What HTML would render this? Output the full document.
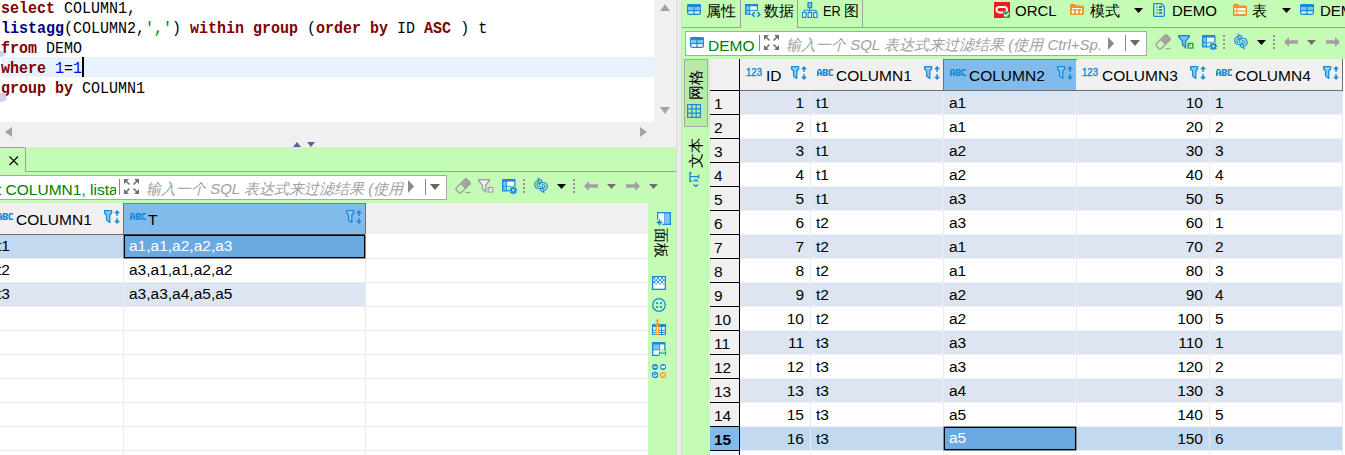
<!DOCTYPE html><html><head><meta charset="utf-8"><style>
*{margin:0;padding:0;box-sizing:border-box}
html,body{width:1345px;height:455px;overflow:hidden;background:#f0f0f0;font-family:"Liberation Sans", sans-serif;font-size:15px;color:#000;position:relative}
.t{position:absolute;white-space:nowrap;line-height:18px;font-size:15.5px}
.m{position:absolute;white-space:pre;font-family:"Liberation Mono", monospace;font-size:16.5px;line-height:20px;transform:scaleX(0.909);transform-origin:0 0}
.kw{color:#7f0000;font-weight:bold}
.fn{color:#000080;font-weight:bold}
.str{color:#008000}
.num{color:#0000ff}

</style></head><body>
<div style="position:absolute;left:0px;top:0px;width:654px;height:122px;background:#fff"></div>
<div style="position:absolute;left:1px;top:57px;width:653px;height:20px;background:#e8f2fe"></div>
<div class="m" style="left:1px;top:-1px"><span class="kw">select</span> COLUMN1,</div>
<div class="m" style="left:1px;top:19px"><span class="fn">listagg</span>(COLUMN2,<span class="str">','</span>) <span class="kw">within</span> <span class="kw">group</span> (<span class="kw">order</span> <span class="kw">by</span> ID <span class="kw">ASC</span> ) t</div>
<div class="m" style="left:1px;top:39px"><span class="kw">from</span> DEMO</div>
<div class="m" style="left:1px;top:59px"><span class="kw">where</span> <span class="num">1</span>=<span class="num">1</span></div>
<div class="m" style="left:1px;top:79px"><span class="kw">group</span> <span class="kw">by</span> COLUMN1</div>
<div style="position:absolute;left:82px;top:57px;width:2px;height:20px;background:#000"></div>
<div style="position:absolute;left:-5px;top:50.5px;width:10px;height:6px;background:#cfcff6;border-radius:50%"></div>
<div style="position:absolute;left:-7px;top:93px;width:14px;height:9px;background:#cfcff6;border-radius:50%"></div>
<div style="position:absolute;left:654px;top:0px;width:22px;height:122px;background:#f0f0f0"></div>
<svg style="position:absolute;left:660px;top:4px" width="10" height="7"><polygon points="0,7 10,7 5,0" fill="#a3a3a3"/></svg>
<svg style="position:absolute;left:660px;top:107px" width="10" height="7"><polygon points="0,0 10,0 5,7" fill="#a3a3a3"/></svg>
<svg style="position:absolute;left:5px;top:127px" width="7" height="10"><polygon points="7,0 7,10 0,5" fill="#a3a3a3"/></svg>
<svg style="position:absolute;left:640px;top:127px" width="7" height="10"><polygon points="0,0 0,10 7,5" fill="#a3a3a3"/></svg>
<div style="position:absolute;left:676px;top:0px;width:6px;height:455px;background:#ececec;border-left:1px solid #dadada;border-right:1px solid #dadada"></div>
<div style="position:absolute;left:675px;top:0px;width:1px;height:147px;background:#f8f8f8"></div>
<div style="position:absolute;left:0px;top:147px;width:676px;height:308px;background:#c5fcb5;border-top-right-radius:3px"></div>
<div style="position:absolute;left:0px;top:146px;width:676px;height:1px;background:#f4f0f4"></div>
<svg style="position:absolute;left:293px;top:142px" width="23" height="5"><polygon points="0,5 8,5 4,0" fill="#5f5f9f"/><polygon points="14,0 22,0 18,5" fill="#5f5f9f"/></svg>
<div style="position:absolute;left:-3px;top:147px;width:29px;height:25px;border:1px solid #a0a0a0;border-bottom:none;border-top-right-radius:2px"></div>
<svg style="position:absolute;left:9px;top:156px" width="10" height="10"><path d="M0.5,0.5 L9,9 M9,0.5 L0.5,9" stroke="#000" stroke-width="1.1"/></svg>
<div style="position:absolute;left:25px;top:171px;width:651px;height:1px;background:#a0a0a0"></div>
<div style="position:absolute;left:-2px;top:175px;width:449px;height:25px;background:#fff;border:1px solid #a8a8a8"></div>
<div class="t" style="left:-3px;top:181px;color:#008000;width:119px;overflow:hidden;font-size:15.5px">t COLUMN1, lista</div>
<div style="position:absolute;left:119px;top:179px;width:1px;height:16px;background:#8c8c8c"></div>
<svg style="position:absolute;left:124px;top:179px;overflow:visible" width="15" height="15" viewBox="0 0 15 15"><path d="M1.5,1.5 L5.5,5.5 M13.5,1.5 L9.5,5.5 M1.5,13.5 L5.5,9.5 M13.5,13.5 L9.5,9.5" stroke="#707070" stroke-width="1.6"/><polygon points="0,0 5,0 0,5" fill="#707070"/><polygon points="15,0 10,0 15,5" fill="#707070"/><polygon points="0,15 5,15 0,10" fill="#707070"/><polygon points="15,15 10,15 15,10" fill="#707070"/></svg>
<div class="t" style="left:146px;top:180px;color:#a0a0a0;font-style:italic;width:258px;overflow:hidden;font-size:15px">输入一个 SQL 表达式来过滤结果 (使用 Ctrl</div>
<svg style="position:absolute;left:408px;top:180px" width="7" height="13"><polygon points="0,0 0,13 6,6.5" fill="#8a8a8a"/></svg>
<div style="position:absolute;left:425px;top:179px;width:1px;height:16px;background:#8c8c8c"></div>
<svg style="position:absolute;left:430px;top:184px" width="11" height="6"><polygon points="0,0 10,0 5,6" fill="#666"/></svg>
<svg style="position:absolute;left:456px;top:179px;overflow:visible" width="15" height="14" viewBox="0 0 15 14"><g transform="rotate(-45 7 7)"><rect x="-0.5" y="3.6" width="15" height="6.8" rx="2" fill="none" stroke="#a3a3a3" stroke-width="1.5"/><path d="M6.5,3 H13 Q15.2,3 15.2,5 V9 Q15.2,11 13,11 H6.5 Z" fill="#a3a3a3"/></g><rect x="9.5" y="13" width="5" height="1.2" fill="#a3a3a3"/></svg>
<svg style="position:absolute;left:478px;top:179px;overflow:visible" width="16" height="14" viewBox="0 0 16 14"><polygon points="0.7,0.7 11.3,0.7 11.3,1.7 7.6,6 7.6,12.6 4.4,9.6 4.4,6 0.7,1.7" fill="#f4f4f4" stroke="#a3a3a3" stroke-width="1.4" stroke-linejoin="miter"/><rect x="10.2" y="8.4" width="4.6" height="4.6" fill="#fff" stroke="#a3a3a3" stroke-width="1.3"/><rect x="11.3" y="9.5" width="1.5" height="1.5" fill="#a3a3a3"/></svg>
<svg style="position:absolute;left:502px;top:179px;overflow:visible" width="16" height="16" viewBox="0 0 16 16"><rect x="0" y="0" width="13.5" height="12.5" rx="1" fill="#1b8ad6"/><rect x="1.3" y="2.6" width="2.9" height="4.2" fill="#7cc5f0"/><rect x="1.3" y="7.6" width="2.9" height="3.6" fill="#7cc5f0"/><rect x="5" y="2.6" width="7.2" height="4.2" fill="#fff"/><rect x="5" y="7.6" width="4" height="3.6" fill="#c5fcb5"/><circle cx="11.3" cy="11.3" r="4.3" fill="#c5fcb5"/><g fill="#1b8ad6"><circle cx="11.3" cy="11.3" r="2.8"/><rect x="10.5" y="7.3" width="1.6" height="8"/><rect x="7.3" y="10.5" width="8" height="1.6"/><rect x="10.5" y="7.3" width="1.6" height="8" transform="rotate(45 11.3 11.3)"/><rect x="10.5" y="7.3" width="1.6" height="8" transform="rotate(-45 11.3 11.3)"/></g><circle cx="11.3" cy="11.3" r="1.1" fill="#fff"/></svg>
<svg style="position:absolute;left:523px;top:179px;overflow:visible" width="2" height="14" viewBox="0 0 2 14"><rect x="0" y="0" width="2" height="2" fill="#a38c9a"/><rect x="0" y="4" width="2" height="2" fill="#a38c9a"/><rect x="0" y="8" width="2" height="2" fill="#a38c9a"/><rect x="0" y="12" width="2" height="2" fill="#a38c9a"/></svg>
<svg style="position:absolute;left:534px;top:178px;overflow:visible" width="15" height="15" viewBox="0 0 15 15"><g transform="rotate(-15 7 7.5)"><path d="M6.5,9 C0.8,9 0.8,3 6,3 M7.5,6 C13.2,6 13.2,12 8,12" fill="none" stroke="#1b8ad6" stroke-width="3.4"/><path d="M6.5,9 C0.8,9 0.8,3 6,3 M7.5,6 C13.2,6 13.2,12 8,12" fill="none" stroke="#c5fcb5" stroke-width="1.1"/><polygon points="6,0 9.2,3 6,6" fill="#c5fcb5" stroke="#1b8ad6" stroke-width="1.1"/><polygon points="8,9 4.8,12 8,15" fill="#c5fcb5" stroke="#1b8ad6" stroke-width="1.1"/></g></svg>
<svg style="position:absolute;left:557px;top:184px;overflow:visible" width="9" height="5" viewBox="0 0 9 5"><polygon points="0,0 9,0 4.5,5" fill="#000"/></svg>
<svg style="position:absolute;left:573px;top:179px;overflow:visible" width="2" height="14" viewBox="0 0 2 14"><rect x="0" y="0" width="2" height="2" fill="#a38c9a"/><rect x="0" y="4" width="2" height="2" fill="#a38c9a"/><rect x="0" y="8" width="2" height="2" fill="#a38c9a"/><rect x="0" y="12" width="2" height="2" fill="#a38c9a"/></svg>
<svg style="position:absolute;left:584px;top:181px;overflow:visible" width="14" height="10" viewBox="0 0 14 10"><polygon points="0,5 5,0 5,3.2 14,3.2 14,6.8 5,6.8 5,10" fill="#a39ea3"/></svg>
<svg style="position:absolute;left:607px;top:184px;overflow:visible" width="9" height="5" viewBox="0 0 9 5"><polygon points="0,0 9,0 4.5,5" fill="#707070"/></svg>
<svg style="position:absolute;left:626px;top:181px;overflow:visible" width="14" height="10" viewBox="0 0 14 10"><polygon points="14,5 9,0 9,3.2 0,3.2 0,6.8 9,6.8 9,10" fill="#a39ea3"/></svg>
<svg style="position:absolute;left:649px;top:184px;overflow:visible" width="9" height="5" viewBox="0 0 9 5"><polygon points="0,0 9,0 4.5,5" fill="#707070"/></svg>
<div style="position:absolute;left:0px;top:203px;width:648px;height:252px;background:#fff"></div>
<div style="position:absolute;left:0px;top:203px;width:648px;height:31px;background:#f0f0f0"></div>
<div style="position:absolute;left:124px;top:203px;width:241px;height:31px;background:#80bbeb"></div>
<div style="position:absolute;left:123px;top:203px;width:1px;height:31px;background:#6e6e6e"></div>
<div style="position:absolute;left:365px;top:203px;width:1px;height:31px;background:#6e6e6e"></div>
<div style="position:absolute;left:0px;top:234px;width:365px;height:1px;background:#6e6e6e"></div>
<div class="t" style="left:16px;top:211px;font-size:15.5px">COLUMN1</div>
<div class="t" style="left:148px;top:211px;font-size:15.5px">T</div>
<div style="position:absolute;left:124px;top:203px;width:241px;height:1px;background:#808080"></div>
<svg style="position:absolute;left:-3px;top:213px;overflow:visible" width="17" height="7" viewBox="0 0 17 7"><rect x="0" y="1.5" width="1.7" height="5.5" fill="#1b8ad6"/><rect x="3.4" y="1.5" width="1.7" height="5.5" fill="#1b8ad6"/><rect x="1" y="0" width="3" height="1.6" fill="#1b8ad6"/><rect x="0" y="3.7" width="5" height="1.3" fill="#1b8ad6"/><rect x="5.8" y="0" width="1.7" height="7" fill="#1b8ad6"/><rect x="5.8" y="0" width="4.2" height="1.5" fill="#1b8ad6"/><rect x="5.8" y="2.9" width="4.2" height="1.4" fill="#1b8ad6"/><rect x="5.8" y="5.5" width="4.2" height="1.5" fill="#1b8ad6"/><rect x="9.3" y="0.7" width="1.7" height="2.4" fill="#1b8ad6"/><rect x="9.3" y="3.9" width="1.7" height="2.4" fill="#1b8ad6"/><rect x="11.6" y="0.7" width="1.7" height="5.6" fill="#1b8ad6"/><rect x="12.4" y="0" width="3.8" height="1.5" fill="#1b8ad6"/><rect x="12.4" y="5.5" width="3.8" height="1.5" fill="#1b8ad6"/></svg>
<svg style="position:absolute;left:130px;top:213px;overflow:visible" width="17" height="7" viewBox="0 0 17 7"><rect x="0" y="1.5" width="1.7" height="5.5" fill="#1b8ad6"/><rect x="3.4" y="1.5" width="1.7" height="5.5" fill="#1b8ad6"/><rect x="1" y="0" width="3" height="1.6" fill="#1b8ad6"/><rect x="0" y="3.7" width="5" height="1.3" fill="#1b8ad6"/><rect x="5.8" y="0" width="1.7" height="7" fill="#1b8ad6"/><rect x="5.8" y="0" width="4.2" height="1.5" fill="#1b8ad6"/><rect x="5.8" y="2.9" width="4.2" height="1.4" fill="#1b8ad6"/><rect x="5.8" y="5.5" width="4.2" height="1.5" fill="#1b8ad6"/><rect x="9.3" y="0.7" width="1.7" height="2.4" fill="#1b8ad6"/><rect x="9.3" y="3.9" width="1.7" height="2.4" fill="#1b8ad6"/><rect x="11.6" y="0.7" width="1.7" height="5.6" fill="#1b8ad6"/><rect x="12.4" y="0" width="3.8" height="1.5" fill="#1b8ad6"/><rect x="12.4" y="5.5" width="3.8" height="1.5" fill="#1b8ad6"/></svg>
<svg style="position:absolute;left:104px;top:210px;overflow:visible" width="17" height="14" viewBox="0 0 17 14"><polygon points="0.6,0.6 7.6,0.6 7.6,3 5.8,5 5.8,12.4 2.6,10 2.6,5 0.6,3" fill="#8ccbf2" stroke="#1b8ad6" stroke-width="1.3" stroke-linejoin="round"/><polygon points="10.1,3.2 13.05,0.1 16,3.2" fill="#1b8ad6"/><rect x="12.25" y="2.8" width="1.6" height="3" fill="#1b8ad6"/><rect x="12.25" y="8.2" width="1.6" height="3" fill="#1b8ad6"/><polygon points="10.1,10.8 13.05,14 16,10.8" fill="#1b8ad6"/></svg>
<svg style="position:absolute;left:346px;top:210px;overflow:visible" width="17" height="14" viewBox="0 0 17 14"><polygon points="0.6,0.6 7.6,0.6 7.6,3 5.8,5 5.8,12.4 2.6,10 2.6,5 0.6,3" fill="#8ccbf2" stroke="#1b8ad6" stroke-width="1.3" stroke-linejoin="round"/><polygon points="10.1,3.2 13.05,0.1 16,3.2" fill="#1b8ad6"/><rect x="12.25" y="2.8" width="1.6" height="3" fill="#1b8ad6"/><rect x="12.25" y="8.2" width="1.6" height="3" fill="#1b8ad6"/><polygon points="10.1,10.8 13.05,14 16,10.8" fill="#1b8ad6"/></svg>
<div style="position:absolute;left:0px;top:235px;width:123px;height:23px;background:#c3d9ef"></div>
<div style="position:absolute;left:124px;top:235px;width:241px;height:23px;background:#c3d9ef"></div>
<div style="position:absolute;left:0px;top:258px;width:648px;height:1px;background:#ebebeb"></div>
<div style="position:absolute;left:0px;top:283px;width:123px;height:23px;background:#dce5f1"></div>
<div style="position:absolute;left:124px;top:283px;width:241px;height:23px;background:#dce5f1"></div>
<div style="position:absolute;left:0px;top:282px;width:648px;height:1px;background:#ebebeb"></div>
<div style="position:absolute;left:0px;top:306px;width:648px;height:1px;background:#ebebeb"></div>
<div style="position:absolute;left:0px;top:330px;width:648px;height:1px;background:#ebebeb"></div>
<div style="position:absolute;left:0px;top:354px;width:648px;height:1px;background:#ebebeb"></div>
<div style="position:absolute;left:0px;top:378px;width:648px;height:1px;background:#ebebeb"></div>
<div style="position:absolute;left:0px;top:402px;width:648px;height:1px;background:#ebebeb"></div>
<div style="position:absolute;left:0px;top:426px;width:648px;height:1px;background:#ebebeb"></div>
<div style="position:absolute;left:0px;top:450px;width:648px;height:1px;background:#ebebeb"></div>
<div style="position:absolute;left:123px;top:235px;width:1px;height:220px;background:#ebebeb"></div>
<div style="position:absolute;left:365px;top:235px;width:1px;height:220px;background:#ebebeb"></div>
<div style="position:absolute;left:124px;top:235px;width:241px;height:23px;background:#6aa9e2;border:1px solid #000;box-shadow:0 0 0 0.4px #000"></div>
<div class="t" style="left:-3px;top:237px;">t1</div>
<div class="t" style="left:129px;top:237px;color:#fff">a1,a1,a2,a2,a3</div>
<div class="t" style="left:-3px;top:261px;">t2</div>
<div class="t" style="left:129px;top:261px;">a3,a1,a1,a2,a2</div>
<div class="t" style="left:-3px;top:285px;">t3</div>
<div class="t" style="left:129px;top:285px;">a3,a3,a4,a5,a5</div>
<div style="position:absolute;left:648px;top:203px;width:28px;height:252px;background:#c5fcb5"></div>
<svg style="position:absolute;left:657px;top:212px;overflow:visible" width="14" height="14" viewBox="0 0 14 14"><rect x="0" y="0" width="14" height="13" fill="#1b8ad6"/><rect x="1.3" y="1.3" width="6" height="10.4" fill="#fff"/><rect x="8" y="1.3" width="4.7" height="10.4" fill="#7cc5f0"/><circle cx="2.5" cy="10.5" r="3.2" fill="#c5fcb5"/><g fill="#1b8ad6"><circle cx="2.5" cy="10.5" r="1.8"/><rect x="1.9" y="7.5" width="1.2" height="6"/><rect x="-0.5" y="9.9" width="6" height="1.2"/></g></svg>
<div style="position:absolute;left:631px;top:234px;width:60px;height:18px;line-height:18px;text-align:center;font-size:15px;transform:rotate(90deg);white-space:nowrap;">面板</div>
<svg style="position:absolute;left:652px;top:276px;overflow:visible" width="14" height="14" viewBox="0 0 14 14"><rect x="0" y="0" width="14" height="14" fill="#1b8ad6"/><rect x="1.3" y="1.3" width="11.4" height="11.4" fill="#fff"/><rect x="1.3" y="1.3" width="1.9" height="1.9" fill="#1b8ad6"/><rect x="5.1" y="1.3" width="1.9" height="1.9" fill="#1b8ad6"/><rect x="8.9" y="1.3" width="1.9" height="1.9" fill="#1b8ad6"/><rect x="3.2" y="3.2" width="1.9" height="1.9" fill="#1b8ad6"/><rect x="6.999999999999999" y="3.2" width="1.9" height="1.9" fill="#1b8ad6"/><rect x="10.8" y="3.2" width="1.9" height="1.9" fill="#1b8ad6"/><rect x="1.3" y="5.1" width="1.9" height="1.9" fill="#1b8ad6"/><rect x="5.1" y="5.1" width="1.9" height="1.9" fill="#1b8ad6"/><rect x="8.9" y="5.1" width="1.9" height="1.9" fill="#1b8ad6"/><rect x="3.2" y="6.999999999999999" width="1.9" height="1.9" fill="#7cc5f0"/><rect x="6.999999999999999" y="6.999999999999999" width="1.9" height="1.9" fill="#7cc5f0"/><rect x="10.8" y="6.999999999999999" width="1.9" height="1.9" fill="#7cc5f0"/></svg>
<svg style="position:absolute;left:652px;top:298px;overflow:visible" width="14" height="14" viewBox="0 0 14 14"><circle cx="7" cy="7" r="6.3" fill="none" stroke="#1b8ad6" stroke-width="1.3"/><rect x="4.2" y="4.2" width="1.9" height="1.9" fill="#1b8ad6"/><rect x="4.2" y="8" width="1.9" height="1.9" fill="#1b8ad6"/><rect x="8" y="4.2" width="1.9" height="1.9" fill="#1b8ad6"/><rect x="8" y="8" width="1.9" height="1.9" fill="#1b8ad6"/></svg>
<svg style="position:absolute;left:652px;top:319px;overflow:visible" width="14" height="16" viewBox="0 0 14 16"><rect x="0" y="5" width="14" height="11" rx="1" fill="#1b8ad6"/><rect x="1.2" y="8" width="11.6" height="7" fill="#fff"/><rect x="1.2" y="10.8" width="11.6" height="1" fill="#1b8ad6"/><rect x="1.2" y="13" width="11.6" height="1" fill="#1b8ad6"/><rect x="9" y="8" width="1" height="7" fill="#1b8ad6"/><rect x="3.5" y="4" width="4" height="12" fill="#f29422"/><rect x="4.8" y="8" width="1.4" height="7" fill="#fff"/><path d="M5.5,0 V3.5 M3.8,1.8 H7.2" stroke="#f29422" stroke-width="1.2"/></svg>
<svg style="position:absolute;left:652px;top:342px;overflow:visible" width="14" height="14" viewBox="0 0 14 14"><rect x="0" y="0" width="13.5" height="14" fill="#1b8ad6"/><rect x="1.3" y="2.5" width="6" height="5" fill="#7cc5f0"/><rect x="8" y="2.5" width="4.2" height="5" fill="#fff"/><rect x="1.3" y="8.3" width="10.9" height="4.4" fill="#fff"/><circle cx="10" cy="11" r="3.6" fill="#c5fcb5"/><path d="M7.5,11 H13.5 M7.5,9.2 V12.8 M13.5,9.2 V12.8" stroke="#1b8ad6" stroke-width="1.1"/></svg>
<svg style="position:absolute;left:652px;top:364px;overflow:visible" width="14" height="14" viewBox="0 0 14 14"><circle cx="3" cy="3" r="3" fill="#1b8ad6"/><rect x="1.2" y="2.4" width="3.6" height="1.2" fill="#fff"/><circle cx="11" cy="3" r="3" fill="#1b8ad6"/><rect x="10" y="1.8" width="3" height="2.4" fill="#fff"/><polygon points="10.4,1.2 8.6,3 10.4,4.8" fill="#fff"/><circle cx="3" cy="11" r="2.6" fill="#fff" stroke="#1b8ad6" stroke-width="1.2"/><path d="M1.4,9.4 L4.6,12.6 M4.6,9.4 L1.4,12.6" stroke="#1b8ad6" stroke-width="1.1"/><circle cx="11" cy="11" r="3" fill="#f29422"/><rect x="9.2" y="9.6" width="3.6" height="1" fill="#fff"/><rect x="9.2" y="11.4" width="3.6" height="1" fill="#fff"/></svg>
<div style="position:absolute;left:682px;top:0px;width:663px;height:455px;background:#c5fcb5"></div>
<div style="position:absolute;left:682px;top:27px;width:663px;height:1px;background:#a0a0a0"></div>
<div style="position:absolute;left:682px;top:0px;width:59px;height:28px;border-right:1px solid #a0a0a0;border-bottom:1px solid #a0a0a0"></div>
<div style="position:absolute;left:797px;top:0px;width:66px;height:28px;border-left:1px solid #a0a0a0;border-right:1px solid #a0a0a0;border-bottom:1px solid #a0a0a0"></div>
<div style="position:absolute;left:741px;top:27px;width:56px;height:1px;background:#c5fcb5"></div>
<div class="t" style="left:706px;top:1.5px;font-size:15px">属性</div>
<svg style="position:absolute;left:687px;top:4px;overflow:visible" width="14" height="11" viewBox="0 0 14 11"><rect x="0.65" y="0.65" width="12.7" height="9.7" rx="1.6" fill="none" stroke="#1b8ad6" stroke-width="1.3"/><rect x="0" y="0" width="14" height="3" rx="1.5" fill="#1b8ad6"/><rect x="1.3" y="3" width="11.4" height="3" fill="#7cc5f0"/><rect x="1" y="6" width="12" height="1.2" fill="#1b8ad6"/><rect x="6.4" y="3" width="1.2" height="7.5" fill="#1b8ad6"/></svg>
<svg style="position:absolute;left:745px;top:4px;overflow:visible" width="16" height="14" viewBox="0 0 16 14"><rect x="0" y="0" width="13" height="10.8" fill="#1b8ad6"/><rect x="1.2" y="2.3" width="3" height="3.6" fill="#7cc5f0"/><rect x="1.2" y="6.9" width="3" height="2.8" fill="#7cc5f0"/><rect x="5.2" y="2.3" width="6.6" height="3.6" fill="#fff"/><rect x="5.2" y="6.9" width="6.6" height="2.8" fill="#fff"/><rect x="6" y="7" width="10" height="7" rx="3" fill="#c5fcb5"/><path d="M9.6,8.1 L7.4,10.5 L9.6,12.9 M12.6,8.1 L14.8,10.5 L12.6,12.9" fill="none" stroke="#1b8ad6" stroke-width="1.6"/></svg>
<svg style="position:absolute;left:802px;top:2px;overflow:visible" width="16" height="16" viewBox="0 0 16 16"><rect x="6" y="0.6" width="3.6" height="5" fill="#7cc5f0" stroke="#1b8ad6" stroke-width="1.2"/><path d="M7.8,5.6 V8 M2,10 V8.3 H14 V10 M7.8,8.3 V10" fill="none" stroke="#1b8ad6" stroke-width="1.1"/><rect x="0.6" y="10.6" width="3.4" height="4.8" fill="#fff" stroke="#1b8ad6" stroke-width="1.2"/><rect x="6.1" y="10.6" width="3.4" height="4.8" fill="#fff" stroke="#1b8ad6" stroke-width="1.2"/><rect x="11.6" y="10.6" width="3.4" height="4.8" fill="#fff" stroke="#1b8ad6" stroke-width="1.2"/></svg>
<svg style="position:absolute;left:994px;top:2px;overflow:visible" width="16" height="16" viewBox="0 0 16 16"><rect x="0" y="0" width="16" height="16" fill="#ed1c24"/><rect x="2.5" y="5" width="10.5" height="5.5" rx="2.75" fill="none" stroke="#fff" stroke-width="1.8"/><rect x="9" y="9.5" width="7" height="6.5" fill="#2e9f4e"/><path d="M10.2,12.5 L12,14.3 L14.8,10.8" fill="none" stroke="#fff" stroke-width="1.3"/></svg>
<svg style="position:absolute;left:1070px;top:4px;overflow:visible" width="14" height="11" viewBox="0 0 14 11"><path d="M0,1.5 Q0,0 1.5,0 H5 L6.5,1.5 H12.5 Q14,1.5 14,3 V10 Q14,11 13,11 H1 Q0,11 0,10 Z" fill="#f29422"/><path d="M2.5,4.5 H11.5 M2.5,4.5 V6 M7,4.5 V6 M11.5,4.5 V6" stroke="#fff" stroke-width="1" fill="none"/><rect x="1.8" y="6.5" width="2.4" height="3" fill="#fff"/><rect x="5.8" y="6.5" width="2.4" height="3" fill="#fff"/><rect x="9.8" y="6.5" width="2.4" height="3" fill="#fff"/></svg>
<svg style="position:absolute;left:1134px;top:8px;overflow:visible" width="9" height="5" viewBox="0 0 9 5"><polygon points="0,0 9,0 4.5,5" fill="#000"/></svg>
<svg style="position:absolute;left:1153px;top:3px;overflow:visible" width="12" height="14" viewBox="0 0 12 14"><path d="M0.7,1.5 Q0.7,0.7 1.5,0.7 H8.5 L11.3,3.5 V12.5 Q11.3,13.3 10.5,13.3 H1.5 Q0.7,13.3 0.7,12.5 Z" fill="none" stroke="#1b8ad6" stroke-width="1.3"/><rect x="3" y="3.5" width="2" height="1" fill="#1b8ad6"/><rect x="6" y="3" width="3" height="2" fill="#1b8ad6"/><rect x="3" y="6.5" width="2" height="1" fill="#1b8ad6"/><rect x="6" y="6" width="3" height="2" fill="#1b8ad6"/><rect x="3" y="9.5" width="2" height="1" fill="#1b8ad6"/><rect x="6" y="9" width="3" height="2" fill="#1b8ad6"/></svg>
<svg style="position:absolute;left:1233px;top:4px;overflow:visible" width="14" height="12" viewBox="0 0 14 12"><path d="M0,1.5 Q0,0 1.5,0 H5 L6.5,1.5 H12.5 Q14,1.5 14,3 V10.5 Q14,12 12.5,12 H1.5 Q0,12 0,10.5 Z" fill="#f29422"/><rect x="1.5" y="4" width="2" height="2.5" fill="#fff"/><rect x="4.5" y="4" width="8" height="2.5" fill="#fff"/><rect x="1.5" y="7.5" width="2" height="2.5" fill="#fff"/><rect x="4.5" y="7.5" width="8" height="2.5" fill="#fff"/></svg>
<svg style="position:absolute;left:1282px;top:8px;overflow:visible" width="9" height="5" viewBox="0 0 9 5"><polygon points="0,0 9,0 4.5,5" fill="#000"/></svg>
<svg style="position:absolute;left:1300px;top:4px;overflow:visible" width="14" height="11" viewBox="0 0 14 11"><rect x="0.65" y="0.65" width="12.7" height="9.7" rx="1.6" fill="none" stroke="#1b8ad6" stroke-width="1.3"/><rect x="0" y="0" width="14" height="3" rx="1.5" fill="#1b8ad6"/><rect x="1.3" y="3" width="11.4" height="3" fill="#7cc5f0"/><rect x="1" y="6" width="12" height="1.2" fill="#1b8ad6"/><rect x="6.4" y="3" width="1.2" height="7.5" fill="#1b8ad6"/></svg>
<div class="t" style="left:764px;top:1.5px;font-size:15px">数据</div>
<div class="t" style="left:823px;top:1.5px;font-size:15px;transform:scaleX(0.85);transform-origin:0 0">ER</div>
<div class="t" style="left:844px;top:1.5px;font-size:15px">图</div>
<div class="t" style="left:1015px;top:1.5px;font-size:15px">ORCL</div>
<div class="t" style="left:1090px;top:1.5px;font-size:15px">模式</div>
<div class="t" style="left:1172px;top:1.5px;font-size:15px">DEMO</div>
<div class="t" style="left:1252px;top:1.5px;font-size:15px">表</div>
<div class="t" style="left:1320px;top:1.5px;font-size:15px">DEMO</div>
<div style="position:absolute;left:685px;top:31px;width:462px;height:25px;background:#fff;border:1px solid #a8a8a8"></div>
<div class="t" style="left:708px;top:37px;color:#008000">DEMO</div>
<svg style="position:absolute;left:690px;top:37px;overflow:visible" width="14" height="11" viewBox="0 0 14 11"><rect x="0.65" y="0.65" width="12.7" height="9.7" rx="1.6" fill="none" stroke="#1b8ad6" stroke-width="1.3"/><rect x="0" y="0" width="14" height="3" rx="1.5" fill="#1b8ad6"/><rect x="1.3" y="3" width="11.4" height="3" fill="#7cc5f0"/><rect x="1" y="6" width="12" height="1.2" fill="#1b8ad6"/><rect x="6.4" y="3" width="1.2" height="7.5" fill="#1b8ad6"/></svg>
<svg style="position:absolute;left:764px;top:35px;overflow:visible" width="15" height="15" viewBox="0 0 15 15"><path d="M1.5,1.5 L5.5,5.5 M13.5,1.5 L9.5,5.5 M1.5,13.5 L5.5,9.5 M13.5,13.5 L9.5,9.5" stroke="#707070" stroke-width="1.6"/><polygon points="0,0 5,0 0,5" fill="#707070"/><polygon points="15,0 10,0 15,5" fill="#707070"/><polygon points="0,15 5,15 0,10" fill="#707070"/><polygon points="15,15 10,15 15,10" fill="#707070"/></svg>
<div style="position:absolute;left:759px;top:35px;width:1px;height:16px;background:#8c8c8c"></div>
<div class="t" style="left:786px;top:36px;color:#a0a0a0;font-style:italic;width:318px;overflow:hidden;font-size:15px">输入一个 SQL 表达式来过滤结果 (使用 Ctrl+Sp.</div>
<svg style="position:absolute;left:1108px;top:37px" width="7" height="13"><polygon points="0,0 0,13 6,6.5" fill="#8a8a8a"/></svg>
<div style="position:absolute;left:1125px;top:35px;width:1px;height:16px;background:#8c8c8c"></div>
<svg style="position:absolute;left:1130px;top:40px" width="11" height="6"><polygon points="0,0 10,0 5,6" fill="#666"/></svg>
<svg style="position:absolute;left:1156px;top:35px;overflow:visible" width="15" height="14" viewBox="0 0 15 14"><g transform="rotate(-45 7 7)"><rect x="-0.5" y="3.6" width="15" height="6.8" rx="2" fill="none" stroke="#a3a3a3" stroke-width="1.5"/><path d="M6.5,3 H13 Q15.2,3 15.2,5 V9 Q15.2,11 13,11 H6.5 Z" fill="#a3a3a3"/></g><rect x="9.5" y="13" width="5" height="1.2" fill="#a3a3a3"/></svg>
<svg style="position:absolute;left:1178px;top:35px;overflow:visible" width="16" height="14" viewBox="0 0 16 14"><polygon points="0.7,0.7 11.3,0.7 11.3,1.7 7.6,6 7.6,12.6 4.4,9.6 4.4,6 0.7,1.7" fill="#7cc5f0" stroke="#1b8ad6" stroke-width="1.4" stroke-linejoin="miter"/><rect x="10.2" y="8.4" width="4.6" height="4.6" fill="#fff" stroke="#0aa52a" stroke-width="1.3"/><rect x="11.3" y="9.5" width="1.5" height="1.5" fill="#0aa52a"/></svg>
<svg style="position:absolute;left:1202px;top:35px;overflow:visible" width="16" height="16" viewBox="0 0 16 16"><rect x="0" y="0" width="13.5" height="12.5" rx="1" fill="#1b8ad6"/><rect x="1.3" y="2.6" width="2.9" height="4.2" fill="#7cc5f0"/><rect x="1.3" y="7.6" width="2.9" height="3.6" fill="#7cc5f0"/><rect x="5" y="2.6" width="7.2" height="4.2" fill="#fff"/><rect x="5" y="7.6" width="4" height="3.6" fill="#c5fcb5"/><circle cx="11.3" cy="11.3" r="4.3" fill="#c5fcb5"/><g fill="#1b8ad6"><circle cx="11.3" cy="11.3" r="2.8"/><rect x="10.5" y="7.3" width="1.6" height="8"/><rect x="7.3" y="10.5" width="8" height="1.6"/><rect x="10.5" y="7.3" width="1.6" height="8" transform="rotate(45 11.3 11.3)"/><rect x="10.5" y="7.3" width="1.6" height="8" transform="rotate(-45 11.3 11.3)"/></g><circle cx="11.3" cy="11.3" r="1.1" fill="#fff"/></svg>
<svg style="position:absolute;left:1223px;top:35px;overflow:visible" width="2" height="14" viewBox="0 0 2 14"><rect x="0" y="0" width="2" height="2" fill="#a38c9a"/><rect x="0" y="4" width="2" height="2" fill="#a38c9a"/><rect x="0" y="8" width="2" height="2" fill="#a38c9a"/><rect x="0" y="12" width="2" height="2" fill="#a38c9a"/></svg>
<svg style="position:absolute;left:1234px;top:34px;overflow:visible" width="15" height="15" viewBox="0 0 15 15"><g transform="rotate(-15 7 7.5)"><path d="M6.5,9 C0.8,9 0.8,3 6,3 M7.5,6 C13.2,6 13.2,12 8,12" fill="none" stroke="#1b8ad6" stroke-width="3.4"/><path d="M6.5,9 C0.8,9 0.8,3 6,3 M7.5,6 C13.2,6 13.2,12 8,12" fill="none" stroke="#c5fcb5" stroke-width="1.1"/><polygon points="6,0 9.2,3 6,6" fill="#c5fcb5" stroke="#1b8ad6" stroke-width="1.1"/><polygon points="8,9 4.8,12 8,15" fill="#c5fcb5" stroke="#1b8ad6" stroke-width="1.1"/></g></svg>
<svg style="position:absolute;left:1257px;top:40px;overflow:visible" width="9" height="5" viewBox="0 0 9 5"><polygon points="0,0 9,0 4.5,5" fill="#000"/></svg>
<svg style="position:absolute;left:1273px;top:35px;overflow:visible" width="2" height="14" viewBox="0 0 2 14"><rect x="0" y="0" width="2" height="2" fill="#a38c9a"/><rect x="0" y="4" width="2" height="2" fill="#a38c9a"/><rect x="0" y="8" width="2" height="2" fill="#a38c9a"/><rect x="0" y="12" width="2" height="2" fill="#a38c9a"/></svg>
<svg style="position:absolute;left:1284px;top:37px;overflow:visible" width="14" height="10" viewBox="0 0 14 10"><polygon points="0,5 5,0 5,3.2 14,3.2 14,6.8 5,6.8 5,10" fill="#a39ea3"/></svg>
<svg style="position:absolute;left:1307px;top:40px;overflow:visible" width="9" height="5" viewBox="0 0 9 5"><polygon points="0,0 9,0 4.5,5" fill="#707070"/></svg>
<svg style="position:absolute;left:1326px;top:37px;overflow:visible" width="14" height="10" viewBox="0 0 14 10"><polygon points="14,5 9,0 9,3.2 0,3.2 0,6.8 9,6.8 9,10" fill="#a39ea3"/></svg>
<svg style="position:absolute;left:1349px;top:40px;overflow:visible" width="9" height="5" viewBox="0 0 9 5"><polygon points="0,0 9,0 4.5,5" fill="#707070"/></svg>
<div style="position:absolute;left:710px;top:59px;width:635px;height:396px;background:#fff"></div>
<div style="position:absolute;left:710px;top:59px;width:29px;height:396px;background:#f0f0f0"></div>
<div style="position:absolute;left:739px;top:59px;width:1px;height:396px;background:#000"></div>
<div style="position:absolute;left:740px;top:59px;width:70px;height:31px;background:#f0f0f0"></div>
<div style="position:absolute;left:810px;top:59px;width:1px;height:31px;background:#6e6e6e"></div>
<div class="t" style="left:766px;top:67px;font-size:15.5px">ID</div>
<svg style="position:absolute;left:745.5px;top:67px;overflow:visible" width="17" height="10" viewBox="0 0 17 10"><text x="0" y="8.6" font-family="Liberation Sans" font-size="11.5" fill="#1b8ad6" stroke="#1b8ad6" stroke-width="0.45" textLength="16" lengthAdjust="spacingAndGlyphs">123</text></svg>
<svg style="position:absolute;left:791px;top:66px;overflow:visible" width="17" height="14" viewBox="0 0 17 14"><polygon points="0.6,0.6 7.6,0.6 7.6,3 5.8,5 5.8,12.4 2.6,10 2.6,5 0.6,3" fill="#8ccbf2" stroke="#1b8ad6" stroke-width="1.3" stroke-linejoin="round"/><polygon points="10.1,3.2 13.05,0.1 16,3.2" fill="#1b8ad6"/><rect x="12.25" y="2.8" width="1.6" height="3" fill="#1b8ad6"/><rect x="12.25" y="8.2" width="1.6" height="3" fill="#1b8ad6"/><polygon points="10.1,10.8 13.05,14 16,10.8" fill="#1b8ad6"/></svg>
<div style="position:absolute;left:810px;top:59px;width:133px;height:31px;background:#f0f0f0"></div>
<div style="position:absolute;left:943px;top:59px;width:1px;height:31px;background:#6e6e6e"></div>
<div class="t" style="left:836px;top:67px;font-size:15.5px">COLUMN1</div>
<svg style="position:absolute;left:817px;top:69px;overflow:visible" width="17" height="7" viewBox="0 0 17 7"><rect x="0" y="1.5" width="1.7" height="5.5" fill="#1b8ad6"/><rect x="3.4" y="1.5" width="1.7" height="5.5" fill="#1b8ad6"/><rect x="1" y="0" width="3" height="1.6" fill="#1b8ad6"/><rect x="0" y="3.7" width="5" height="1.3" fill="#1b8ad6"/><rect x="5.8" y="0" width="1.7" height="7" fill="#1b8ad6"/><rect x="5.8" y="0" width="4.2" height="1.5" fill="#1b8ad6"/><rect x="5.8" y="2.9" width="4.2" height="1.4" fill="#1b8ad6"/><rect x="5.8" y="5.5" width="4.2" height="1.5" fill="#1b8ad6"/><rect x="9.3" y="0.7" width="1.7" height="2.4" fill="#1b8ad6"/><rect x="9.3" y="3.9" width="1.7" height="2.4" fill="#1b8ad6"/><rect x="11.6" y="0.7" width="1.7" height="5.6" fill="#1b8ad6"/><rect x="12.4" y="0" width="3.8" height="1.5" fill="#1b8ad6"/><rect x="12.4" y="5.5" width="3.8" height="1.5" fill="#1b8ad6"/></svg>
<svg style="position:absolute;left:924px;top:66px;overflow:visible" width="17" height="14" viewBox="0 0 17 14"><polygon points="0.6,0.6 7.6,0.6 7.6,3 5.8,5 5.8,12.4 2.6,10 2.6,5 0.6,3" fill="#8ccbf2" stroke="#1b8ad6" stroke-width="1.3" stroke-linejoin="round"/><polygon points="10.1,3.2 13.05,0.1 16,3.2" fill="#1b8ad6"/><rect x="12.25" y="2.8" width="1.6" height="3" fill="#1b8ad6"/><rect x="12.25" y="8.2" width="1.6" height="3" fill="#1b8ad6"/><polygon points="10.1,10.8 13.05,14 16,10.8" fill="#1b8ad6"/></svg>
<div style="position:absolute;left:943px;top:59px;width:133px;height:31px;background:#80bbeb"></div>
<div style="position:absolute;left:1076px;top:59px;width:1px;height:31px;background:#6e6e6e"></div>
<div class="t" style="left:969px;top:67px;font-size:15.5px">COLUMN2</div>
<svg style="position:absolute;left:950px;top:69px;overflow:visible" width="17" height="7" viewBox="0 0 17 7"><rect x="0" y="1.5" width="1.7" height="5.5" fill="#1b8ad6"/><rect x="3.4" y="1.5" width="1.7" height="5.5" fill="#1b8ad6"/><rect x="1" y="0" width="3" height="1.6" fill="#1b8ad6"/><rect x="0" y="3.7" width="5" height="1.3" fill="#1b8ad6"/><rect x="5.8" y="0" width="1.7" height="7" fill="#1b8ad6"/><rect x="5.8" y="0" width="4.2" height="1.5" fill="#1b8ad6"/><rect x="5.8" y="2.9" width="4.2" height="1.4" fill="#1b8ad6"/><rect x="5.8" y="5.5" width="4.2" height="1.5" fill="#1b8ad6"/><rect x="9.3" y="0.7" width="1.7" height="2.4" fill="#1b8ad6"/><rect x="9.3" y="3.9" width="1.7" height="2.4" fill="#1b8ad6"/><rect x="11.6" y="0.7" width="1.7" height="5.6" fill="#1b8ad6"/><rect x="12.4" y="0" width="3.8" height="1.5" fill="#1b8ad6"/><rect x="12.4" y="5.5" width="3.8" height="1.5" fill="#1b8ad6"/></svg>
<svg style="position:absolute;left:1057px;top:66px;overflow:visible" width="17" height="14" viewBox="0 0 17 14"><polygon points="0.6,0.6 7.6,0.6 7.6,3 5.8,5 5.8,12.4 2.6,10 2.6,5 0.6,3" fill="#8ccbf2" stroke="#1b8ad6" stroke-width="1.3" stroke-linejoin="round"/><polygon points="10.1,3.2 13.05,0.1 16,3.2" fill="#1b8ad6"/><rect x="12.25" y="2.8" width="1.6" height="3" fill="#1b8ad6"/><rect x="12.25" y="8.2" width="1.6" height="3" fill="#1b8ad6"/><polygon points="10.1,10.8 13.05,14 16,10.8" fill="#1b8ad6"/></svg>
<div style="position:absolute;left:1076px;top:59px;width:133px;height:31px;background:#f0f0f0"></div>
<div style="position:absolute;left:1209px;top:59px;width:1px;height:31px;background:#6e6e6e"></div>
<div class="t" style="left:1102px;top:67px;font-size:15.5px">COLUMN3</div>
<svg style="position:absolute;left:1081.5px;top:67px;overflow:visible" width="17" height="10" viewBox="0 0 17 10"><text x="0" y="8.6" font-family="Liberation Sans" font-size="11.5" fill="#1b8ad6" stroke="#1b8ad6" stroke-width="0.45" textLength="16" lengthAdjust="spacingAndGlyphs">123</text></svg>
<svg style="position:absolute;left:1190px;top:66px;overflow:visible" width="17" height="14" viewBox="0 0 17 14"><polygon points="0.6,0.6 7.6,0.6 7.6,3 5.8,5 5.8,12.4 2.6,10 2.6,5 0.6,3" fill="#8ccbf2" stroke="#1b8ad6" stroke-width="1.3" stroke-linejoin="round"/><polygon points="10.1,3.2 13.05,0.1 16,3.2" fill="#1b8ad6"/><rect x="12.25" y="2.8" width="1.6" height="3" fill="#1b8ad6"/><rect x="12.25" y="8.2" width="1.6" height="3" fill="#1b8ad6"/><polygon points="10.1,10.8 13.05,14 16,10.8" fill="#1b8ad6"/></svg>
<div style="position:absolute;left:1209px;top:59px;width:133px;height:31px;background:#f0f0f0"></div>
<div style="position:absolute;left:1342px;top:59px;width:1px;height:31px;background:#6e6e6e"></div>
<div class="t" style="left:1235px;top:67px;font-size:15.5px">COLUMN4</div>
<svg style="position:absolute;left:1216px;top:69px;overflow:visible" width="17" height="7" viewBox="0 0 17 7"><rect x="0" y="1.5" width="1.7" height="5.5" fill="#1b8ad6"/><rect x="3.4" y="1.5" width="1.7" height="5.5" fill="#1b8ad6"/><rect x="1" y="0" width="3" height="1.6" fill="#1b8ad6"/><rect x="0" y="3.7" width="5" height="1.3" fill="#1b8ad6"/><rect x="5.8" y="0" width="1.7" height="7" fill="#1b8ad6"/><rect x="5.8" y="0" width="4.2" height="1.5" fill="#1b8ad6"/><rect x="5.8" y="2.9" width="4.2" height="1.4" fill="#1b8ad6"/><rect x="5.8" y="5.5" width="4.2" height="1.5" fill="#1b8ad6"/><rect x="9.3" y="0.7" width="1.7" height="2.4" fill="#1b8ad6"/><rect x="9.3" y="3.9" width="1.7" height="2.4" fill="#1b8ad6"/><rect x="11.6" y="0.7" width="1.7" height="5.6" fill="#1b8ad6"/><rect x="12.4" y="0" width="3.8" height="1.5" fill="#1b8ad6"/><rect x="12.4" y="5.5" width="3.8" height="1.5" fill="#1b8ad6"/></svg>
<svg style="position:absolute;left:1323px;top:66px;overflow:visible" width="17" height="14" viewBox="0 0 17 14"><polygon points="0.6,0.6 7.6,0.6 7.6,3 5.8,5 5.8,12.4 2.6,10 2.6,5 0.6,3" fill="#8ccbf2" stroke="#1b8ad6" stroke-width="1.3" stroke-linejoin="round"/><polygon points="10.1,3.2 13.05,0.1 16,3.2" fill="#1b8ad6"/><rect x="12.25" y="2.8" width="1.6" height="3" fill="#1b8ad6"/><rect x="12.25" y="8.2" width="1.6" height="3" fill="#1b8ad6"/><polygon points="10.1,10.8 13.05,14 16,10.8" fill="#1b8ad6"/></svg>
<div style="position:absolute;left:740px;top:90px;width:603px;height:1px;background:#6e6e6e"></div>
<div style="position:absolute;left:943px;top:59px;width:134px;height:1px;background:#808080"></div>
<div style="position:absolute;left:943px;top:59px;width:1px;height:31px;background:#6e6e6e"></div>
<div style="position:absolute;left:710px;top:90px;width:29px;height:1px;background:#000"></div>
<div style="position:absolute;left:740px;top:91px;width:603px;height:23px;background:#dce5f1"></div>
<div class="t" style="left:714px;top:94.5px;">1</div>
<div class="t" style="left:740px;top:93.5px;width:64px;text-align:right">1</div>
<div class="t" style="left:816px;top:93.5px;">t1</div>
<div class="t" style="left:949px;top:93.5px;">a1</div>
<div class="t" style="left:1076px;top:93.5px;width:127px;text-align:right">10</div>
<div class="t" style="left:1215px;top:93.5px;">1</div>
<div style="position:absolute;left:740px;top:114px;width:603px;height:1px;background:#eef0f3"></div>
<div style="position:absolute;left:710px;top:114px;width:29px;height:1px;background:#000"></div>
<div style="position:absolute;left:740px;top:115px;width:603px;height:23px;background:#fff"></div>
<div class="t" style="left:714px;top:118.5px;">2</div>
<div class="t" style="left:740px;top:117.5px;width:64px;text-align:right">2</div>
<div class="t" style="left:816px;top:117.5px;">t1</div>
<div class="t" style="left:949px;top:117.5px;">a1</div>
<div class="t" style="left:1076px;top:117.5px;width:127px;text-align:right">20</div>
<div class="t" style="left:1215px;top:117.5px;">2</div>
<div style="position:absolute;left:740px;top:138px;width:603px;height:1px;background:#eef0f3"></div>
<div style="position:absolute;left:710px;top:138px;width:29px;height:1px;background:#000"></div>
<div style="position:absolute;left:740px;top:139px;width:603px;height:23px;background:#dce5f1"></div>
<div class="t" style="left:714px;top:142.5px;">3</div>
<div class="t" style="left:740px;top:141.5px;width:64px;text-align:right">3</div>
<div class="t" style="left:816px;top:141.5px;">t1</div>
<div class="t" style="left:949px;top:141.5px;">a2</div>
<div class="t" style="left:1076px;top:141.5px;width:127px;text-align:right">30</div>
<div class="t" style="left:1215px;top:141.5px;">3</div>
<div style="position:absolute;left:740px;top:162px;width:603px;height:1px;background:#eef0f3"></div>
<div style="position:absolute;left:710px;top:162px;width:29px;height:1px;background:#000"></div>
<div style="position:absolute;left:740px;top:163px;width:603px;height:23px;background:#fff"></div>
<div class="t" style="left:714px;top:166.5px;">4</div>
<div class="t" style="left:740px;top:165.5px;width:64px;text-align:right">4</div>
<div class="t" style="left:816px;top:165.5px;">t1</div>
<div class="t" style="left:949px;top:165.5px;">a2</div>
<div class="t" style="left:1076px;top:165.5px;width:127px;text-align:right">40</div>
<div class="t" style="left:1215px;top:165.5px;">4</div>
<div style="position:absolute;left:740px;top:186px;width:603px;height:1px;background:#eef0f3"></div>
<div style="position:absolute;left:710px;top:186px;width:29px;height:1px;background:#000"></div>
<div style="position:absolute;left:740px;top:187px;width:603px;height:23px;background:#dce5f1"></div>
<div class="t" style="left:714px;top:190.5px;">5</div>
<div class="t" style="left:740px;top:189.5px;width:64px;text-align:right">5</div>
<div class="t" style="left:816px;top:189.5px;">t1</div>
<div class="t" style="left:949px;top:189.5px;">a3</div>
<div class="t" style="left:1076px;top:189.5px;width:127px;text-align:right">50</div>
<div class="t" style="left:1215px;top:189.5px;">5</div>
<div style="position:absolute;left:740px;top:210px;width:603px;height:1px;background:#eef0f3"></div>
<div style="position:absolute;left:710px;top:210px;width:29px;height:1px;background:#000"></div>
<div style="position:absolute;left:740px;top:211px;width:603px;height:23px;background:#fff"></div>
<div class="t" style="left:714px;top:214.5px;">6</div>
<div class="t" style="left:740px;top:213.5px;width:64px;text-align:right">6</div>
<div class="t" style="left:816px;top:213.5px;">t2</div>
<div class="t" style="left:949px;top:213.5px;">a3</div>
<div class="t" style="left:1076px;top:213.5px;width:127px;text-align:right">60</div>
<div class="t" style="left:1215px;top:213.5px;">1</div>
<div style="position:absolute;left:740px;top:234px;width:603px;height:1px;background:#eef0f3"></div>
<div style="position:absolute;left:710px;top:234px;width:29px;height:1px;background:#000"></div>
<div style="position:absolute;left:740px;top:235px;width:603px;height:23px;background:#dce5f1"></div>
<div class="t" style="left:714px;top:238.5px;">7</div>
<div class="t" style="left:740px;top:237.5px;width:64px;text-align:right">7</div>
<div class="t" style="left:816px;top:237.5px;">t2</div>
<div class="t" style="left:949px;top:237.5px;">a1</div>
<div class="t" style="left:1076px;top:237.5px;width:127px;text-align:right">70</div>
<div class="t" style="left:1215px;top:237.5px;">2</div>
<div style="position:absolute;left:740px;top:258px;width:603px;height:1px;background:#eef0f3"></div>
<div style="position:absolute;left:710px;top:258px;width:29px;height:1px;background:#000"></div>
<div style="position:absolute;left:740px;top:259px;width:603px;height:23px;background:#fff"></div>
<div class="t" style="left:714px;top:262.5px;">8</div>
<div class="t" style="left:740px;top:261.5px;width:64px;text-align:right">8</div>
<div class="t" style="left:816px;top:261.5px;">t2</div>
<div class="t" style="left:949px;top:261.5px;">a1</div>
<div class="t" style="left:1076px;top:261.5px;width:127px;text-align:right">80</div>
<div class="t" style="left:1215px;top:261.5px;">3</div>
<div style="position:absolute;left:740px;top:282px;width:603px;height:1px;background:#eef0f3"></div>
<div style="position:absolute;left:710px;top:282px;width:29px;height:1px;background:#000"></div>
<div style="position:absolute;left:740px;top:283px;width:603px;height:23px;background:#dce5f1"></div>
<div class="t" style="left:714px;top:286.5px;">9</div>
<div class="t" style="left:740px;top:285.5px;width:64px;text-align:right">9</div>
<div class="t" style="left:816px;top:285.5px;">t2</div>
<div class="t" style="left:949px;top:285.5px;">a2</div>
<div class="t" style="left:1076px;top:285.5px;width:127px;text-align:right">90</div>
<div class="t" style="left:1215px;top:285.5px;">4</div>
<div style="position:absolute;left:740px;top:306px;width:603px;height:1px;background:#eef0f3"></div>
<div style="position:absolute;left:710px;top:306px;width:29px;height:1px;background:#000"></div>
<div style="position:absolute;left:740px;top:307px;width:603px;height:23px;background:#fff"></div>
<div class="t" style="left:714px;top:310.5px;">10</div>
<div class="t" style="left:740px;top:309.5px;width:64px;text-align:right">10</div>
<div class="t" style="left:816px;top:309.5px;">t2</div>
<div class="t" style="left:949px;top:309.5px;">a2</div>
<div class="t" style="left:1076px;top:309.5px;width:127px;text-align:right">100</div>
<div class="t" style="left:1215px;top:309.5px;">5</div>
<div style="position:absolute;left:740px;top:330px;width:603px;height:1px;background:#eef0f3"></div>
<div style="position:absolute;left:710px;top:330px;width:29px;height:1px;background:#000"></div>
<div style="position:absolute;left:740px;top:331px;width:603px;height:23px;background:#dce5f1"></div>
<div class="t" style="left:714px;top:334.5px;">11</div>
<div class="t" style="left:740px;top:333.5px;width:64px;text-align:right">11</div>
<div class="t" style="left:816px;top:333.5px;">t3</div>
<div class="t" style="left:949px;top:333.5px;">a3</div>
<div class="t" style="left:1076px;top:333.5px;width:127px;text-align:right">110</div>
<div class="t" style="left:1215px;top:333.5px;">1</div>
<div style="position:absolute;left:740px;top:354px;width:603px;height:1px;background:#eef0f3"></div>
<div style="position:absolute;left:710px;top:354px;width:29px;height:1px;background:#000"></div>
<div style="position:absolute;left:740px;top:355px;width:603px;height:23px;background:#fff"></div>
<div class="t" style="left:714px;top:358.5px;">12</div>
<div class="t" style="left:740px;top:357.5px;width:64px;text-align:right">12</div>
<div class="t" style="left:816px;top:357.5px;">t3</div>
<div class="t" style="left:949px;top:357.5px;">a3</div>
<div class="t" style="left:1076px;top:357.5px;width:127px;text-align:right">120</div>
<div class="t" style="left:1215px;top:357.5px;">2</div>
<div style="position:absolute;left:740px;top:378px;width:603px;height:1px;background:#eef0f3"></div>
<div style="position:absolute;left:710px;top:378px;width:29px;height:1px;background:#000"></div>
<div style="position:absolute;left:740px;top:379px;width:603px;height:23px;background:#dce5f1"></div>
<div class="t" style="left:714px;top:382.5px;">13</div>
<div class="t" style="left:740px;top:381.5px;width:64px;text-align:right">13</div>
<div class="t" style="left:816px;top:381.5px;">t3</div>
<div class="t" style="left:949px;top:381.5px;">a4</div>
<div class="t" style="left:1076px;top:381.5px;width:127px;text-align:right">130</div>
<div class="t" style="left:1215px;top:381.5px;">3</div>
<div style="position:absolute;left:740px;top:402px;width:603px;height:1px;background:#eef0f3"></div>
<div style="position:absolute;left:710px;top:402px;width:29px;height:1px;background:#000"></div>
<div style="position:absolute;left:740px;top:403px;width:603px;height:23px;background:#fff"></div>
<div class="t" style="left:714px;top:406.5px;">14</div>
<div class="t" style="left:740px;top:405.5px;width:64px;text-align:right">15</div>
<div class="t" style="left:816px;top:405.5px;">t3</div>
<div class="t" style="left:949px;top:405.5px;">a5</div>
<div class="t" style="left:1076px;top:405.5px;width:127px;text-align:right">140</div>
<div class="t" style="left:1215px;top:405.5px;">5</div>
<div style="position:absolute;left:740px;top:426px;width:603px;height:1px;background:#eef0f3"></div>
<div style="position:absolute;left:710px;top:426px;width:29px;height:1px;background:#000"></div>
<div style="position:absolute;left:710px;top:427px;width:29px;height:23px;background:#80bbeb"></div>
<div style="position:absolute;left:740px;top:427px;width:603px;height:23px;background:#c3d9ef"></div>
<div class="t" style="left:714px;top:430.5px;font-weight:bold">15</div>
<div class="t" style="left:740px;top:429.5px;width:64px;text-align:right">16</div>
<div class="t" style="left:816px;top:429.5px;">t3</div>
<div class="t" style="left:949px;top:429.5px;color:#fff">a5</div>
<div class="t" style="left:1076px;top:429.5px;width:127px;text-align:right">150</div>
<div class="t" style="left:1215px;top:429.5px;">6</div>
<div style="position:absolute;left:710px;top:450px;width:29px;height:1px;background:#000"></div>
<div style="position:absolute;left:740px;top:450px;width:603px;height:1px;background:#eef0f3"></div>
<div style="position:absolute;left:810px;top:91px;width:1px;height:364px;background:#ebebeb"></div>
<div style="position:absolute;left:943px;top:91px;width:1px;height:364px;background:#ebebeb"></div>
<div style="position:absolute;left:1076px;top:91px;width:1px;height:364px;background:#ebebeb"></div>
<div style="position:absolute;left:1209px;top:91px;width:1px;height:364px;background:#ebebeb"></div>
<div style="position:absolute;left:1342px;top:91px;width:1px;height:364px;background:#ebebeb"></div>
<div style="position:absolute;left:944px;top:427px;width:132px;height:23px;border:1px solid #000;background:#6aa9e2;box-shadow:0 0 0 0.4px #000"></div>
<div class="t" style="left:949px;top:429px;color:#fff">a5</div>
<div style="position:absolute;left:684px;top:59px;width:24px;height:68px;background:#b8eaa8;border:1px solid #a8a8a8"></div>
<div style="position:absolute;left:666px;top:76px;width:60px;height:18px;line-height:18px;text-align:center;font-size:15px;transform:rotate(-90deg);white-space:nowrap;">网格</div>
<svg style="position:absolute;left:687px;top:104px;overflow:visible" width="14" height="14" viewBox="0 0 14 14"><rect x="0.6" y="0.6" width="12.8" height="12.8" fill="none" stroke="#1b8ad6" stroke-width="1.2"/><rect x="4.266666666666667" y="0" width="1.2" height="14" fill="#1b8ad6"/><rect x="0" y="4.266666666666667" width="14" height="1.2" fill="#1b8ad6"/><rect x="8.533333333333333" y="0" width="1.2" height="14" fill="#1b8ad6"/><rect x="0" y="8.533333333333333" width="14" height="1.2" fill="#1b8ad6"/></svg>
<div style="position:absolute;left:666px;top:144px;width:60px;height:18px;line-height:18px;text-align:center;font-size:15px;transform:rotate(-90deg);white-space:nowrap;">文本</div>
<svg style="position:absolute;left:689px;top:172px;overflow:visible" width="11" height="15" viewBox="0 0 11 15"><path d="M2.6,0.7 H1 V9.3 H2.6 M1,4.6 H9.6 M9.6,2.8 V6.4" stroke="#1b8ad6" stroke-width="1.4" fill="none"/><path d="M4.6,9.6 L6.8,7.6 L9,9.6 M4.6,12.4 L6.8,14.4 L9,12.4" stroke="#1b8ad6" stroke-width="1.4" fill="none"/></svg>
</body></html>
